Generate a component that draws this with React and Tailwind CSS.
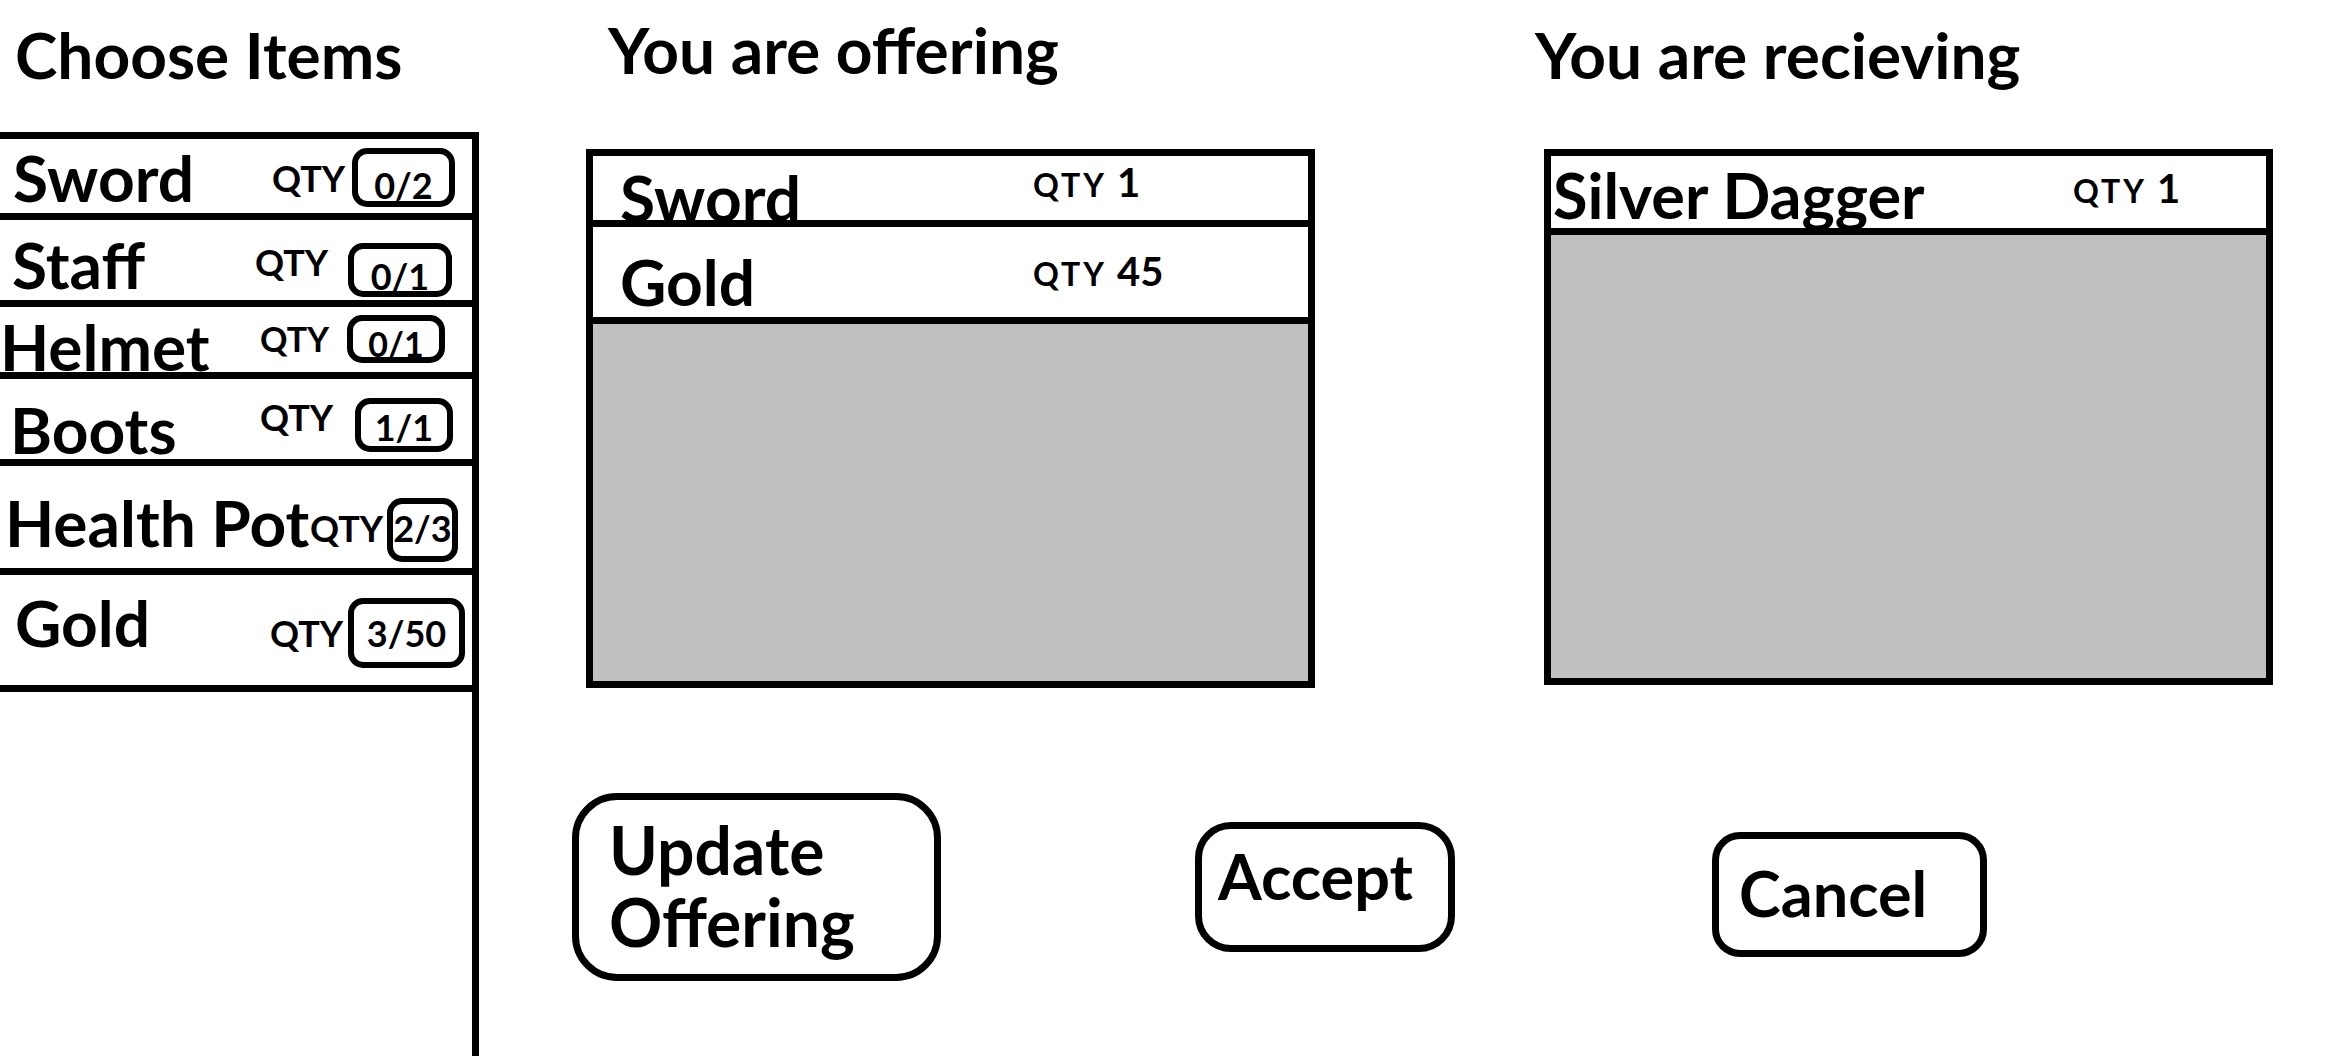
import React from 'react';

const stock = [
  { name: 'Sword', qty: '0/2', row: 'h-[81px]', nameCls: 'ml-[13px] w-[259px] mt-[1px]', qtyCls: 'w-[80px] mt-[18px] text-[36px]', boxCls: 'mt-[9px] w-[103px] h-[59px]', valCls: 'mt-[10px] text-[36px]' },
  { name: 'Staff', qty: '0/1', row: 'h-[87px]', nameCls: 'ml-[12px] w-[243px] mt-[7px]', qtyCls: 'w-[93px] mt-[21px] text-[36px]', boxCls: 'mt-[23px] w-[104px] h-[54px]', valCls: 'mt-[6px] text-[36px]' },
  { name: 'Helmet', qty: '0/1', row: 'h-[72px]', nameCls: 'ml-0 w-[260px] mt-[2px]', qtyCls: 'w-[87px] mt-[12px] text-[34px]', boxCls: 'mt-[8px] w-[98px] h-[48px]', valCls: 'mt-[3px] text-[34px]' },
  { name: 'Boots', qty: '1/1', row: 'h-[87px]', nameCls: 'ml-[10px] w-[250px] mt-[13px]', qtyCls: 'w-[95px] mt-[17px] text-[36px]', boxCls: 'mt-[19px] w-[98px] h-[54px]', valCls: 'mt-[2px] text-[36px]' },
  { name: 'Health Pot', qty: '2/3', row: 'h-[109px]', nameCls: 'ml-[5px] w-[305px] mt-[19px]', qtyCls: 'w-[77px] mt-[41px] text-[36px]', boxCls: 'mt-[32px] w-[71px] h-[64px]', valCls: 'mt-[3px] text-[36px]' },
  { name: 'Gold', qty: '3/50', row: 'h-[117px]', nameCls: 'ml-[15px] w-[255px] mt-[10px]', qtyCls: 'w-[78px] mt-[37px] text-[36px]', boxCls: 'mt-[23px] w-[117px] h-[70px]', valCls: 'mt-[8px] text-[36px]' },
];

function Qty({ n, cls }) {
  // QTY label + count sitting on one baseline
  return (
    <div className={`flex items-baseline ${cls}`}>
      <span className="text-[32px] leading-[1.2] tracking-[3px]">QTY</span>
      <span className="ml-[10px] text-[40px] leading-[1.2]">{n}</span>
    </div>
  );
}

export default function App() {
  return (
    <div className="w-[2332px] h-[1056px] overflow-hidden bg-white text-black font-bold font-[Lato,'Noto_Sans',sans-serif] flex">
      {/* Inventory */}
      <div className="w-[479px] shrink-0 h-full flex flex-col">
        <div className="h-[132px] pt-[17px] pl-[15px] text-[64px] leading-[1.2] whitespace-nowrap">Choose Items</div>
        <div className="flex-1 border-t-[7px] border-r-[7px] border-black">
          {stock.map((it) => (
            <div key={it.name} className={`${it.row} flex items-start border-b-[7px] border-black overflow-hidden`}>
              <span className={`${it.nameCls} shrink-0 text-[64px] leading-[1.2] whitespace-nowrap`}>{it.name}</span>
              <span className={`${it.qtyCls} shrink-0 leading-[1.2]`}>QTY</span>
              <div className={`${it.boxCls} shrink-0 border-[6px] border-black rounded-[15px] overflow-hidden flex justify-center items-start`}>
                <span className={`${it.valCls} leading-[1.2]`}>{it.qty}</span>
              </div>
            </div>
          ))}
        </div>
      </div>

      {/* Trade area */}
      <div className="flex flex-col">
        <div className="flex items-start">
          <section className="ml-[107px] w-[729px] shrink-0">
            <div className="h-[149px] pt-[12px] pl-[22px] text-[64px] leading-[1.2] whitespace-nowrap">You are offering</div>
            <div className="h-[539px] border-[7px] border-black flex flex-col">
              <div className="h-[71px] shrink-0 border-b-[7px] border-black overflow-hidden flex items-start">
                <span className="pl-[27px] w-[440px] shrink-0 mt-[4px] text-[64px] leading-[1.2]">Sword</span>
                <Qty n="1" cls="mt-[2px]" />
              </div>
              <div className="h-[97px] shrink-0 border-b-[7px] border-black overflow-hidden flex items-start">
                <span className="pl-[27px] w-[440px] shrink-0 mt-[17px] text-[64px] leading-[1.2]">Gold</span>
                <Qty n="45" cls="mt-[20px]" />
              </div>
              <div className="flex-1 bg-[#c0c0c0]" />
            </div>
          </section>

          <section className="ml-[229px] w-[729px] shrink-0">
            <div className="h-[149px] pt-[17px] -ml-[9px] text-[64px] leading-[1.2] whitespace-nowrap">You are recieving</div>
            <div className="h-[536px] border-[7px] border-black flex flex-col">
              <div className="h-[79px] shrink-0 border-b-[7px] border-black overflow-hidden flex items-start">
                <span className="pl-[2px] w-[522px] shrink-0 mt-[1px] text-[63px] leading-[1.2] whitespace-nowrap">Silver Dagger</span>
                <Qty n="1" cls="mt-[8px]" />
              </div>
              <div className="flex-1 bg-[#c0c0c0]" />
            </div>
          </section>
        </div>

        {/* Actions */}
        <div className="flex items-start mt-[105px]">
          <button className="ml-[93px] w-[369px] h-[188px] border-[7px] border-black rounded-[45px] pt-[14px] pl-[30px] flex flex-col items-start justify-start text-left text-[66px] leading-[72px] font-bold">
            <span>Update</span>
            <span>Offering</span>
          </button>
          <button className="ml-[254px] mt-[29px] w-[260px] h-[130px] border-[7px] border-black rounded-[36px] pt-[9px] pl-[16px] flex flex-col items-start justify-start text-left text-[63px] leading-[1.2] font-bold">
            <span>Accept</span>
          </button>
          <button className="ml-[257px] mt-[39px] w-[275px] h-[125px] border-[7px] border-black rounded-[28px] pt-[16px] pl-[20px] flex flex-col items-start justify-start text-left text-[63px] leading-[1.2] font-bold">
            <span>Cancel</span>
          </button>
        </div>
      </div>
    </div>
  );
}
